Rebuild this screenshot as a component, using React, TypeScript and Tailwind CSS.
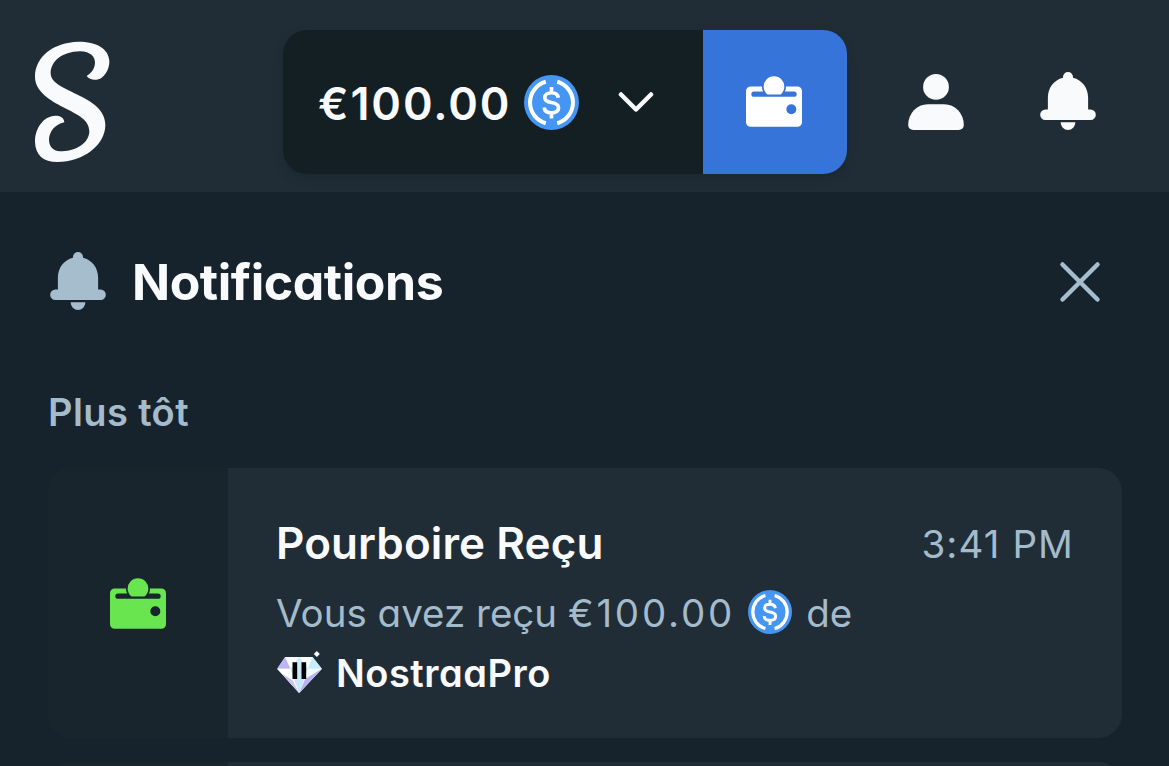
import { clsx } from 'clsx';

type IconProps = { className?: string };

function Logo({ className }: IconProps) {
  return (
    <svg viewBox="0 0 330 435" fill="currentColor" className={className}>
      <path d="M200 138C210 152 232 152 245 143C262 130 269 108 268 92C265 55 230 35 175 35C100 37 45 80 45 140C45 185 90 210 130 232C175 255 208 270 208 305C205 345 160 364 120 364C98 363 87 348 87 328C88 305 105 283 133 277C132 262 120 257 106 257C70 258 45 295 45 335C46 375 70 396 112 396C190 396 256 345 256 285C256 240 215 215 180 198C135 175 92 160 92 130C92 95 125 65 180 64C212 65 225 80 225 98C224 118 212 130 200 138Z" />
    </svg>
  );
}

function WalletIcon({ className }: IconProps) {
  return (
    <svg viewBox="0 0 168 152" fill="currentColor" className={className}>
      <path d="M64.4 55A31 31 0 1 1 103.6 55Z" />
      <path
        fillRule="evenodd"
        d="M14 31H48C48 37 49 42 51 46H24a8 8 0 0 0 0 16H144a8 8 0 0 0 0-16H117C119 42 120 37 120 31H154a14 14 0 0 1 14 14V138a14 14 0 0 1-14 14H14a14 14 0 0 1-14-14V45a14 14 0 0 1 14-14ZM121 99a15 15 0 1 0 30 0a15 15 0 1 0-30 0Z"
      />
    </svg>
  );
}

function BellIcon({ className }: IconProps) {
  return (
    <svg viewBox="0 0 166 173" fill="currentColor" className={className}>
      <path d="M68 17V15a15 15 0 0 1 30 0V17C125 24 143 47 143 76V112H150.500a15.500 15.500 0 0 1 0 31H15.500a15.500 15.500 0 0 1 0-31H23V76C23 47 41 24 68 17Z" />
      <path d="M61 150H105A22 23 0 0 1 61 150Z" />
    </svg>
  );
}

function UserIcon({ className }: IconProps) {
  return (
    <svg viewBox="0 0 166 167" fill="currentColor" className={className}>
      <circle cx="83" cy="38.5" r="38.5" />
      <path d="M58 90H108A58 62 0 0 1 166 152A15 15 0 0 1 151 167H15A15 15 0 0 1 0 152A58 62 0 0 1 58 90Z" />
    </svg>
  );
}

function UsdcIcon({ className }: IconProps) {
  return (
    <svg viewBox="0 0 164 164" fill="none" stroke="#fff" className={className}>
      <circle cx="82" cy="82" r="82" fill="#4595f3" stroke="none" />
      <path strokeWidth="12" d="M65 20.300A64 64 0 0 0 65 143.700M99 20.300A64 64 0 0 1 99 143.700" />
      <path
        strokeWidth="11"
        d="M82 36V54M82 112V130M102 68C101 58 94 53 82 53C69 53 62 59 62 67C62 77 70 80 82 82C96 84 103 88 103 98C103 107 95 113 82 113C69 113 61 107 60 97"
      />
    </svg>
  );
}

function DiamondIcon({ className }: IconProps) {
  return (
    <svg viewBox="0 0 134 126" className={className}>
      <path fill="#dfeafc" d="M24 18H106L134 53L66 126L0 53Z" />
      <path fill="#bdb5f2" d="M24 18L0 53H40Z" />
      <path fill="#f7fbff" d="M24 18H66L40 53Z" />
      <path fill="#fff" d="M66 18H106L92 53Z" />
      <path fill="#cfeaf8" d="M40 53L66 18L92 53Z" />
      <path fill="#c4effa" d="M106 18L134 53L92 53Z" />
      <path fill="#fff" d="M0 53H40L66 126Z" />
      <path fill="#c9c0f7" d="M12 66L46 88L66 126Z" />
      <path fill="#c5e8fb" d="M40 53H92L66 126Z" />
      <path fill="#f4f8ff" d="M92 53H134L66 126Z" />
      <path fill="#b9b2ee" d="M134 53L84 84L66 126Z" />
      <path fill="#000" d="M46 34H60V84H46ZM73 34H87V84H73Z" />
      <path fill="#fff" d="M119 0L128 9L119 18L110 9Z" />
    </svg>
  );
}

function NotificationCard() {
  return (
    <article className="flex h-[270px] shrink-0 overflow-hidden rounded-3xl bg-[#202d37]">
      <div className="flex w-[180px] shrink-0 items-center justify-center bg-[#19252d]">
        <WalletIcon className="h-[51px] w-14 text-[#69e54f]" />
      </div>
      <div className="flex flex-1 flex-col px-12 pt-[45px] text-[#a4bbcb]">
        <div className="flex h-[60px] items-center justify-between">
          <h3 className="text-[44px] font-semibold tracking-[0.1px] text-[#f8fafc]">Pourboire Reçu</h3>
          <time className="pt-[3px] text-[38.500px] tracking-[1.1px]">3:41 PM</time>
        </div>
        <p className="mt-[9px] flex h-[60px] items-center text-[38.500px] whitespace-pre">
          <span className="pt-[3px]">Vous avez reçu </span>
          <span className="pt-[3px] tracking-[2.8px]">€100.00</span>
          <UsdcIcon className="mr-[14px] ml-[13px] size-11" />
          <span className="pt-[3px]">de</span>
        </p>
        <div className="flex h-[60px] items-center">
          <DiamondIcon className="mr-[14px] ml-px h-[42px] w-[45px]" />
          <span className="pt-[3px] text-[38px] font-semibold tracking-[0.5px] text-[#f8fafc]">NostraaPro</span>
        </div>
      </div>
    </article>
  );
}

export default function App() {
  return (
    <div
      className={clsx(
        'flex h-[766px] w-[1169px] flex-col overflow-hidden bg-[#17232c]',
        'font-[Inter,"Liberation_Sans",sans-serif] [font-feature-settings:"cv11"]'
      )}
    >
      {/* Top bar */}
      <header className="flex h-48 shrink-0 items-center bg-[#202d37] pl-5 text-[#f8fafc]">
        <Logo className="mt-[13px] h-[145px] w-[110px]" />

        {/* Balance */}
        <div className="mt-3 ml-[153px] flex h-36 w-[564px] overflow-hidden rounded-3xl shadow-[0_4px_12px_rgba(0,0,0,0.14)]">
          <div className="flex w-[420px] items-center bg-[#141f24] pl-[35px]">
            <span className="w-[206px] pt-[3px] text-[45px] font-semibold tracking-[1.900px]">€100.00</span>
            <UsdcIcon className="size-[55px]" />
            <svg
              viewBox="0 0 36 22"
              fill="none"
              stroke="currentColor"
              strokeWidth="4.5"
              strokeLinecap="round"
              strokeLinejoin="round"
              className="ml-[39px] h-[22px] w-9"
            >
              <path d="M3 3.500L18 18.500L33 3.500" />
            </svg>
          </div>
          <button className="flex w-36 items-center justify-center bg-[#3774da] pr-0.5 pb-px text-white">
            <WalletIcon className="h-[51px] w-14" />
          </button>
        </div>

        <UserIcon className="mt-3 ml-[61px] size-14" />
        <BellIcon className="mt-[9px] ml-[76px] h-[58px] w-14" />
      </header>

      {/* Notifications panel */}
      <main className="flex flex-col px-12">
        <div className="mt-[54px] flex h-[72px] items-center">
          <BellIcon className="mb-0.5 ml-0.5 h-[58px] w-14 text-[#a6bdcd]" />
          <h2 className="ml-[26px] text-[50px] font-bold tracking-[-0.450px] text-[#f8fafc]">Notifications</h2>
          <svg
            viewBox="0 0 42 42"
            stroke="#a6bdcd"
            strokeWidth="4.5"
            strokeLinecap="round"
            className="mr-[20px] ml-auto size-[42px]"
          >
            <path d="M3.500 3.500L38.500 38.500M38.500 3.500L3.500 38.500" />
          </svg>
        </div>
        <p className="mt-[64px] h-[60px] text-[38px] leading-[60px] font-semibold tracking-[0.4px] text-[#a4bbcb]">
          Plus tôt
        </p>
        <div className="-mr-px mt-[26px] flex flex-col gap-6">
          <NotificationCard />
          {/* Top edge of the next card */}
          <div className="flex h-[270px] shrink-0 overflow-hidden rounded-3xl bg-[#202d37]">
            <div className="w-[180px] bg-[#19252d]" />
          </div>
        </div>
      </main>
    </div>
  );
}
